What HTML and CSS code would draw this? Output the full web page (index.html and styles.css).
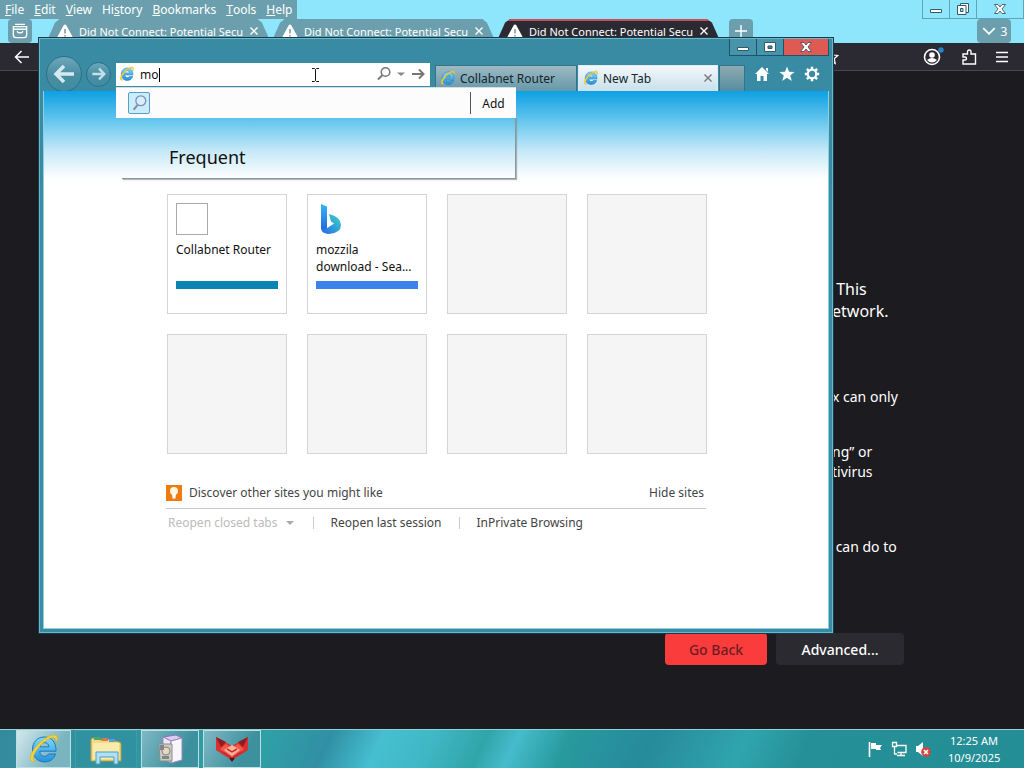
FILE: index.html
```html
<!DOCTYPE html>
<html lang="en">
<head>
<meta charset="utf-8">
<title>New Tab</title>
<meta name="viewport" content="width=device-width, initial-scale=1">
<link rel="stylesheet" href="styles.css">
</head>
<body>
<svg class="defs" aria-hidden="true">
  <defs>
    <linearGradient id="ieBlue" x1="0" y1="0" x2="0" y2="1"><stop offset="0" stop-color="#7fdcf7"/><stop offset="1" stop-color="#2590dc"/></linearGradient>
    <linearGradient id="bingA" x1="0" y1="0" x2="0" y2="1"><stop offset="0" stop-color="#36b5f5"/><stop offset="1" stop-color="#1f5fe0"/></linearGradient>
    <linearGradient id="bingB" x1="0" y1="1" x2="1" y2="0"><stop offset="0" stop-color="#2468e8"/><stop offset="1" stop-color="#3fd5c8"/></linearGradient>
    <symbol id="ie" viewBox="0 0 32 32">
      <path d="M16.500 4C9 4 4.500 9.500 4.500 16.500S9.500 29 16.500 29c5.500 0 9.500-3 11-8h-7c-.8 1.500-2.200 2.200-4 2.200-3 0-4.600-1.900-4.700-5H28C28.500 9.500 23.500 4 16.500 4zm-4.600 9.800c.4-2.700 2-4.200 4.500-4.200s4.200 1.500 4.500 4.200z" fill="url(#ieBlue)" stroke="#1e78bd" stroke-width="1"/>
      <path d="M28 10c2-4 2-8-2-8C19 2 6 13 3 22c-1.500 5 0 8 5 6-3 0-3.500-2-2-6C9 14.500 18 6 24 4.500c3-.6 4 1.500 4 5.500z" fill="#f6d53b" stroke="#d9a91c" stroke-width=".6"/>
    </symbol>
    <symbol id="warn" viewBox="0 0 16 16"><path d="M8 1.500c.6 0 1 .3 1.300.8l6 11c.5 1-.1 1.900-1.200 1.900H1.900c-1.100 0-1.700-.9-1.200-1.900l6-11c.3-.5.700-.8 1.300-.8z" fill="#fff"/><path d="M8 6v4.500M8 12v1.500" stroke="#758c96" stroke-width="1.400"/></symbol>
    <symbol id="close" viewBox="0 0 10 10"><path d="M1.500 1.500l7 7m0-7l-7 7" fill="none" stroke="currentColor" stroke-width="1.400"/></symbol>
    <symbol id="winmin" viewBox="0 0 16 12"><path d="M2.500 6.500h11v3h-11z" fill="#fff" stroke="#33596b"/></symbol>
    <symbol id="winclose" viewBox="0 0 16 12"><path d="M2.500 1.500h3.500l2 2.500 2-2.500h3.500L10 6l3.500 4.500H10L8 8l-2 2.500H2.500L6 6z" fill="#fff" stroke="#4b5563" stroke-width=".9"/></symbol>
  </defs>
</svg>

<div class="desktop">
  <section class="firefox">
    <header class="ff-title">
      <nav class="ff-menu">
        <button><u>F</u>ile</button><button><u>E</u>dit</button><button><u>V</u>iew</button><button>Hi<u>s</u>tory</button><button><u>B</u>ookmarks</button><button><u>T</u>ools</button><button><u>H</u>elp</button>
      </nav>
      <div class="ff-controls">
        <button aria-label="Minimize"><svg viewBox="0 0 16 12"><use href="#winmin"/></svg></button>
        <button aria-label="Restore"><svg viewBox="0 0 16 14"><path d="M5.500 1.500h8v9h-8z" fill="#fff" stroke="#33596b"/><path d="M2.500 3.500h8.500v9H2.500z" fill="#fff" stroke="#33596b"/><path d="M5.500 6.500h2.500v3H5.500z" fill="#8ee6fc" stroke="#33596b"/></svg></button>
        <button aria-label="Close"><svg viewBox="0 0 16 12"><use href="#winclose"/></svg></button>
      </div>
    </header>
    <div class="ff-tabs">
      <button class="ff-view" aria-label="Firefox View"><svg viewBox="0 0 18 18" fill="none" stroke="#fff" stroke-width="1.500"><path d="M3.500 1.500h11M1.500 4h15v9.500q0 3-3 3h-9q-3 0-3-3zM6 9q0 2 1.500 2h3Q12 11 12 9M1.500 7h15"/></svg></button>
      <div class="ff-tab first"><svg class="warn"><use href="#warn"/></svg><span>Did Not Connect: Potential Secu</span><button aria-label="Close tab"><svg><use href="#close"/></svg></button></div>
      <div class="ff-tab"><svg class="warn"><use href="#warn"/></svg><span>Did Not Connect: Potential Secu</span><button aria-label="Close tab"><svg><use href="#close"/></svg></button></div>
      <div class="ff-tab active"><svg class="warn"><use href="#warn"/></svg><span>Did Not Connect: Potential Secu</span><button aria-label="Close tab"><svg><use href="#close"/></svg></button></div>
      <button class="ff-new" aria-label="New tab"><svg viewBox="0 0 14 14"><path d="M7 1v12M1 7h12" stroke="#fff" stroke-width="1.400"/></svg></button>
      <button class="ff-all" aria-label="List all tabs"><svg viewBox="0 0 14 14"><path d="M2 4.500l5 5 5-5" fill="none" stroke="#fff" stroke-width="1.500"/></svg>3</button>
    </div>
    <div class="ff-bar">
      <button aria-label="Back"><svg viewBox="0 0 16 16"><path d="M15 8H1.500M7.500 2l-6 6 6 6" fill="none" stroke="#fff" stroke-width="1.500"/></svg></button>
      <div class="ff-tools">
        <button class="star" aria-label="Bookmark"><svg viewBox="0 0 16 16"><path d="M8 1.500l2 4.500 4.800.5-3.600 3.200 1 4.800L8 12l-4.200 2.500 1-4.800L1.200 6.500 6 6z" fill="none" stroke="#fff" stroke-width="1.200"/></svg></button>
        <button aria-label="Account"><svg class="big" viewBox="0 0 22 20"><circle cx="10" cy="10" r="7.500" fill="none" stroke="#fff" stroke-width="1.600"/><circle cx="10" cy="8" r="2.800" fill="#fff"/><path d="M5 13q5-4 10 0-5 5-10 0z" fill="#fff"/><circle cx="19" cy="3" r="2.700" fill="#2784c7"/></svg></button>
        <button aria-label="Extensions"><svg viewBox="0 0 16 16"><path d="M2 5h4.500V3q0-2 1.800-2T10 3v2h4.500v10H2v-4h2q1.500 0 1.500-1.500T4 8H2z" fill="none" stroke="#fff" stroke-width="1.400"/></svg></button>
        <button aria-label="Menu"><svg viewBox="0 0 16 16"><path d="M2 3.500h12M2 8h12M2 12.500h12" stroke="#fff" stroke-width="1.400"/></svg></button>
      </div>
    </div>
    <main class="ff-page">
      <div class="ff-copy">
        <p class="lead">&nbsp;This<br>etwork.</p>
        <p>x can only</p>
        <p>ng” or<br>tivirus</p>
        <p>&nbsp;can do to</p>
      </div>
      <div class="ff-actions"><button class="go">Go Back</button><button class="adv">Advanced...</button></div>
    </main>
  </section>

  <section class="ie">
    <header class="ie-head">
      <div class="ie-controls">
        <button aria-label="Minimize"><svg viewBox="0 0 16 12"><use href="#winmin"/></svg></button>
        <button aria-label="Maximize"><svg viewBox="0 0 16 12"><path d="M2.500 1.500h11v9h-11z" fill="#fff" stroke="#33596b"/><path d="M6 5h4v2.500H6z" fill="#3a8aa4" stroke="#33596b"/></svg></button>
        <button class="x" aria-label="Close"><svg viewBox="0 0 16 12"><use href="#winclose"/></svg></button>
      </div>
      <div class="ie-nav">
        <button class="round back" aria-label="Back"><svg viewBox="0 0 24 24"><path d="M22 12H4M12 4l-8 8 8 8" fill="none" stroke="#d5e9ef" stroke-width="3.500"/></svg></button>
        <button class="round fwd" aria-label="Forward"><svg viewBox="0 0 24 24"><path d="M2 12h18M12 4l8 8-8 8" fill="none" stroke="#c3dfe8" stroke-width="3.500"/></svg></button>
        <div class="address">
          <svg class="logo"><use href="#ie"/></svg>
          <input type="text" value="mo" aria-label="Address">
          <i class="caret"></i>
          <button aria-label="Search"><svg viewBox="0 0 16 16"><circle cx="9.500" cy="6" r="4.300" fill="none" stroke="#777" stroke-width="1.600"/><path d="M6.500 9L2 13.500" stroke="#777" stroke-width="2"/></svg></button>
          <button class="tiny" aria-label="Search options"><svg viewBox="0 0 8 8"><path d="M0 2.500h8L4 6z" fill="#888"/></svg></button>
          <button aria-label="Go"><svg viewBox="0 0 16 16"><path d="M2 8h11M9 3.500L13.500 8 9 12.500" fill="none" stroke="#777" stroke-width="2"/></svg></button>
        </div>
        <div class="ie-tabs">
          <button class="ie-tab"><svg class="logo"><use href="#ie"/></svg>Collabnet Router</button>
          <div class="ie-tab current"><svg class="logo"><use href="#ie"/></svg><span>New Tab</span><button aria-label="Close tab"><svg><use href="#close"/></svg></button></div>
          <button class="ie-new" aria-label="New tab"></button>
        </div>
        <div class="ie-tools">
          <button aria-label="Home"><svg viewBox="0 0 16 16"><path d="M8 1l7 7h-2v7H9.500v-5h-3v5H3V8H1zM12 2h2v4l-2-2z" fill="#fff"/></svg></button>
          <button aria-label="Favorites"><svg viewBox="0 0 16 16"><path d="M8 .5l2 5.300 5.600.2-4.400 3.500 1.600 5.500L8 11.800 3.200 15l1.600-5.500L.4 6 6 5.800z" fill="#fff"/></svg></button>
          <button aria-label="Tools"><svg viewBox="0 0 16 16"><circle cx="8" cy="8" r="4.300" fill="none" stroke="#fff" stroke-width="2.200"/><path d="M8 .8v3M8 12.200v3M.8 8h3M12.200 8h3M2.900 2.900L5 5M11 11l2.100 2.100M13.100 2.900L11 5M5 11l-2.100 2.100" stroke="#fff" stroke-width="2.400"/></svg></button>
        </div>
      </div>
    </header>
    <main class="newtab">
      <h1>Frequent</h1>
      <div class="tiles">
        <a class="tile" href="#"><span class="blank"></span><span class="name">Collabnet Router</span><i class="strip teal"></i></a>
        <a class="tile" href="#"><svg class="bing" viewBox="0 0 32 32"><path d="M5 1l6 2.500V26l-3 4q-3-2-3-5z" fill="url(#bingA)"/><path d="M13 11q12 3 12 11 0 8-12 9-6 0-8-6 4 2 7-.5l6-4-3-2z" fill="url(#bingB)"/></svg><span class="name">mozzila<br>download - Sea...</span><i class="strip blue"></i></a>
        <div class="tile empty"></div><div class="tile empty"></div><div class="tile empty"></div><div class="tile empty"></div><div class="tile empty"></div><div class="tile empty"></div>
      </div>
      <div class="discover">
        <a href="#"><svg viewBox="0 0 16 16"><path d="M0 0h16v16H0z" fill="#f07a12"/><circle cx="8" cy="6" r="4" fill="#fff6dc"/><path d="M6 8h4l-.5 5.500h-3z" fill="#fff"/></svg>Discover other sites you might like</a>
        <a href="#">Hide sites</a>
      </div>
      <div class="session">
        <button disabled>Reopen closed tabs <svg viewBox="0 0 8 8"><path d="M0 2h8L4 6z" fill="#aaa"/></svg></button><i></i><a href="#">Reopen last session</a><i></i><a href="#">InPrivate Browsing</a>
      </div>
    </main>
    <div class="suggest">
      <div class="suggest-row">
        <button class="provider" aria-label="Search provider"><svg viewBox="0 0 20 20"><circle cx="12" cy="7.500" r="5.500" fill="#d9effa" stroke="#7b8fc4" stroke-width="1.400"/><path d="M8.500 12L4 17.500" stroke="#8a8fa0" stroke-width="2.200"/></svg></button>
        <button class="add">Add</button>
      </div>
      <div class="suggest-glass"></div>
    </div>
    <svg class="pointer" viewBox="0 0 9 16"><path d="M1 1.500h2.500l1 1 1-1H8M4.500 2.500v11M1 14.500h2.500l1-1 1 1H8" fill="none" stroke="#111"/></svg>
  </section>

  <footer class="taskbar">
    <button class="task lit" aria-label="Internet Explorer"><svg><use href="#ie"/></svg></button>
    <button class="task plain" aria-label="File Explorer"><svg viewBox="0 0 34 32"><path d="M2 7q0-2 2-2h6l1 2h6l1-1 12 3q2 0 2 2v17H2z" fill="#f1dc83" stroke="#b79a45"/><path d="M4 10h26v16H4z" fill="#f9ebab"/><path d="M5 4h7v3H5z" fill="#4da765"/><path d="M13 5h6v3h-6z" fill="#d77755"/><path d="M20 6h6v3h-6z" fill="#5ba0cf"/><path d="M7 31V19h22v12h-4v-7H11v7z" fill="#aee0f6" stroke="#4aa0cc"/></svg></button>
    <button class="task" aria-label="Installer"><svg viewBox="0 0 32 32"><path d="M9 4l13-2 6 3-11 3z" fill="#dcccf2" stroke="#8f76b4"/><path d="M9 4l8 4v22l-8-4z" fill="#eee9f8" stroke="#9a8bb5"/><path d="M17 8l11-3v22l-11 3z" fill="#f8f6fc" stroke="#9a8bb5"/><path d="M5 11h13v17H6z" fill="#c9c9c5" stroke="#8c8c88"/><circle cx="12" cy="18" r="4" fill="#e8d8bd" stroke="#8a8378"/><path d="M6 12h4v5H6zM8 23h7v3H8z" fill="#80868a"/></svg></button>
    <button class="task" aria-label="Fox"><svg viewBox="0 0 34 30"><path d="M1 3l9 5 7 4 7-4 9-5v13l-6 4-10 6-10-6-6-4z" fill="#d93030"/><path d="M1 3l10 5-5 5zM33 3L23 8l5 5z" fill="#8e1c24"/><path d="M5 15l6-5 6 4 6-4 6 5-12 9z" fill="#ef5a4a"/><path d="M9 16l8-5 8 5-8 6z" fill="#ffb29a"/><path d="M12 15l5 3 5-3M8 18l9 6 9-6" fill="none" stroke="#c42a2c" stroke-width="1.500"/><path d="M14 24h6l-3 4z" fill="#5e1119"/></svg></button>
    <div class="tray">
      <svg viewBox="0 0 16 16"><path d="M2.500 1v15" stroke="#fff" stroke-width="1.600"/><path d="M4 2h5v2h6l-2 3 1 2H9V8H4z" fill="#fff"/></svg>
      <svg viewBox="0 0 16 16"><path d="M5.500 4.500h9.500v7H6.500M10 11.500V14M6 14.500h8M1.500 1.500h4v4h-4zM3.500 5.500V13H6" fill="none" stroke="#fff" stroke-width="1.300"/></svg>
      <svg viewBox="0 0 16 16"><path d="M1 5h2l5-4v14l-5-4H1z" fill="#fff"/><circle cx="11" cy="11" r="4.800" fill="#d5453f"/><path d="M9 9l4 4m0-4l-4 4" stroke="#fff" stroke-width="1.600"/></svg>
      <time>12:25 AM<br>10/9/2025</time>
    </div>
  </footer>
</div>
</body>
</html>
```
FILE: styles.css
```css
* { box-sizing: border-box; }
body { margin: 0; font-family: "Noto Sans", "Open Sans", sans-serif; font-size: 12px; color: #222; }
button, input { font: inherit; color: inherit; border: 0; padding: 0; margin: 0; background: none; }
button { display: flex; align-items: center; justify-content: center; }
a { color: inherit; text-decoration: none; }
svg { display: block; flex: none; width: 16px; height: 16px; }
h1, p { margin: 0; font-weight: 400; }
.defs { position: absolute; width: 0; height: 0; }

.desktop { position: relative; min-height: 100vh; display: flex; flex-direction: column; overflow: hidden; background: #1c1b20; }

/* Firefox window */
.firefox { flex: 1; display: flex; flex-direction: column; background: #1c1b20; color: #fff; }
.ff-title { display: flex; justify-content: space-between; height: 19px; background: #8ee6fc; }
.ff-menu { display: flex; align-items: center; gap: 10px; padding: 0 5px; background: #6b9fae; }
.ff-controls { display: flex; border: 1px solid #60a4b8; border-top: 0; }
.ff-controls button { width: 27px; border-right: 1px solid #60a4b8; }
.ff-controls button:last-child { width: 46px; border: 0; }
.ff-tabs { display: flex; height: 24px; background: #8ee6fc; }
.ff-view { width: 24px; margin: 0 14px 0 8px; background: #6b9fae; border-radius: 4px; }
.ff-tab { display: flex; align-items: center; gap: 6px; width: 225px; padding: 0 12px 0 11px; background: #6b9fae; clip-path: polygon(0 100%, 4% 16%, 6% 0, 94% 0, 96% 16%, 100% 100%); }
.ff-tab.active { background: linear-gradient(#c74f5b 2px, #2b2a33 2px); }
.ff-tab span { flex: 1; white-space: nowrap; font-size: 11px; }
.ff-tab svg { width: 10px; height: 10px; }
.ff-tab .warn { width: 16px; height: 16px; }
.ff-new { width: 24px; margin-left: 8px; background: #6b9fae; border-radius: 4px; }
.ff-new svg { width: 14px; height: 14px; }
.ff-all { width: 34px; gap: 4px; margin: 0 13px 0 auto; background: #6b9fae; border-radius: 4px; }
.ff-bar { display: flex; align-items: center; justify-content: space-between; height: 28px; padding: 0 14px; background: #2b2a33; border-bottom: 1px solid #48474f; }
.ff-tools { display: flex; align-items: center; gap: 17px; }
.ff-tools .star { margin-right: 66px; }
.ff-tools .big { width: 22px; height: 20px; }
.ff-page { padding-left: 665px; }
.ff-copy { display: flex; flex-direction: column; gap: 35px; padding: 207px 0 0 167px; font-size: 14px; line-height: 20px; white-space: nowrap; }
.ff-copy .lead { margin-bottom: 30px; font-size: 16px; line-height: 22px; }
.ff-copy p:last-child { margin-top: 20px; }
.ff-actions { display: flex; gap: 9px; padding-top: 76px; font-size: 14px; font-weight: 500; }
.ff-actions button { height: 32px; border-radius: 4px; }
.ff-actions .go { width: 102px; background: #fb3c3c; color: #701b20; }
.ff-actions .adv { width: 128px; background: #2b2a30; }

/* Internet Explorer window */
.ie { position: absolute; inset: 38px 191px 135px 39px; display: flex; flex-direction: column; padding: 0 3px 3px; border: 1px solid #6fb7c8; background: #398ba3; box-shadow: 0 0 0 1px #153c4c; }
.ie-head { display: flex; flex-direction: column; height: 52px; }
.ie-controls { display: flex; align-self: flex-end; height: 18px; border: 1px solid #1d5469; border-top: 0; background: #4795ac; }
.ie-controls button { width: 27px; border-right: 1px solid #1d5469; }
.ie-controls .x { width: 44px; border: 0; background: #e05a54; }
.ie-nav { flex: 1; display: flex; align-items: center; padding-left: 3px; }
.round { flex: none; width: 36px; height: 36px; border-radius: 50%; border: 1px solid #2a7088; background: linear-gradient(#6ca7ba, #4b8ea4 50%, #3f8b9f); }
.round.back svg { width: 24px; height: 24px; }
.round.fwd { width: 25px; height: 25px; margin: 0 5px 0 4px; }
.address { position: relative; display: flex; align-items: center; gap: 5px; flex: 0 0 314px; height: 23px; margin-right: 5px; padding: 0 4px 0 3px; background: #fff; }
.address input { flex: 1; min-width: 0; height: 22px; color: #111; outline: 0; }
.address .tiny svg { width: 8px; height: 8px; }
.caret { position: absolute; left: 43px; top: 5px; width: 1px; height: 14px; background: #000; }
.ie-tabs { display: flex; align-self: flex-end; height: 27px; gap: 1px; }
.ie-tab { display: flex; align-items: center; justify-content: flex-start; gap: 4px; width: 142px; padding: 0 4px 2px; border: 1px solid #357488; border-bottom: 0; background: linear-gradient(#9db9c4, #6597a7); color: #14252b; }
.ie-tab.current { width: 140px; background: linear-gradient(#f2f8fb, #c8dfea); border-color: #dcecf2; }
.ie-tab span { flex: 1; }
.ie-tab button svg { width: 10px; height: 10px; color: #777; }
.ie-new { width: 26px; background: linear-gradient(#8eaab3, #568d9e); border: 1px solid #2f7489; }
.ie-tools { display: flex; gap: 9px; margin: 0 9px 0 auto; }

.newtab { flex: 1; display: flex; flex-direction: column; padding: 54px 120px 0 122px; border: 1px solid #8dd0e0; border-top: 0; background: linear-gradient(#0da0e4, #6cc9ee 32px, #c6e9f8 60px, #fff 88px); color: #444; }
.newtab h1 { font-size: 18px; line-height: 24px; padding-left: 3px; color: #111; }
.tiles { display: grid; grid-template-columns: repeat(4, 120px); gap: 20px; margin-top: 25px; padding-left: 1px; }
.tile { display: grid; grid-template-rows: 32px 34px 8px; gap: 6px; align-content: start; height: 120px; padding: 8px; border: 1px solid #d4d4d4; background: #fff; color: #111; line-height: 17px; white-space: nowrap; }
.tile.empty { background: #f5f5f5; }
.tile .blank { width: 32px; border: 1px solid #aaa; }
.tile .bing { width: 32px; height: 32px; }
.strip { height: 8px; }
.strip.teal { background: #0a84b4; }
.strip.blue { background: #3b82ea; }
.discover { display: flex; align-items: center; justify-content: space-between; width: 540px; margin-top: 24px; padding: 6px 2px 6px 0; border-bottom: 1px solid #c8c8c8; line-height: 18px; }
.discover a { display: flex; align-items: center; gap: 7px; }
.session { display: flex; align-items: center; gap: 17px; padding: 5px 2px; line-height: 18px; }
.session button { gap: 8px; margin-right: 2px; color: #bbb; }
.session button svg { width: 8px; height: 8px; }
.session i { width: 1px; height: 12px; background: #ccc; }

.suggest { position: absolute; left: 76px; top: 48px; width: 400px; color: #111; }
.suggest-row { display: flex; align-items: center; justify-content: space-between; height: 31px; padding-left: 12px; border-top: 1px solid #d5dfe3; background: #fcfcfd; }
.provider { width: 22px; height: 22px; border: 1px solid #5a9fc0; border-radius: 2px; background: #c9edfa; }
.provider svg { width: 18px; height: 18px; }
.add { width: 46px; height: 22px; border-left: 1px solid #555; }
.suggest-glass { height: 61px; margin-left: 6px; border: solid #86999f; border-width: 0 1px 1px 0; box-shadow: 1px 1px 1px #8889; }
.pointer { position: absolute; left: 271px; top: 28px; width: 9px; height: 16px; }

/* Taskbar */
.taskbar { display: flex; gap: 4px; height: 39px; padding-left: 16px; border-top: 1px solid #8fd4d8; background: linear-gradient(115deg, #348a9c 0, #2fa0a5 26%, #318fa5 32%, #46bfd0 37%, #3fb7c5 42%, #30a5a8 47%, #45bccd 50%, #289a9d 55%, #268a9c 63%, #30a5ad 72%, #269098 78%, #238e96 100%); }
.task { width: 58px; border: 1px solid #b9e0e5; background: linear-gradient(120deg, #7fb8c3, #3d919f 70%); }
.task.lit { width: 55px; background: linear-gradient(120deg, #d4e8ec, #79b4c0 70%); }
.task.plain { width: 62px; border-color: #3c9da6; background: #3092a1; }
.task svg { width: 34px; height: 32px; }
.tray { display: flex; align-items: center; gap: 8px; margin-left: auto; padding-right: 24px; color: #fff; }
.tray time { width: 52px; margin-left: 9px; text-align: center; white-space: nowrap; font-size: 11px; line-height: 17px; }
```
